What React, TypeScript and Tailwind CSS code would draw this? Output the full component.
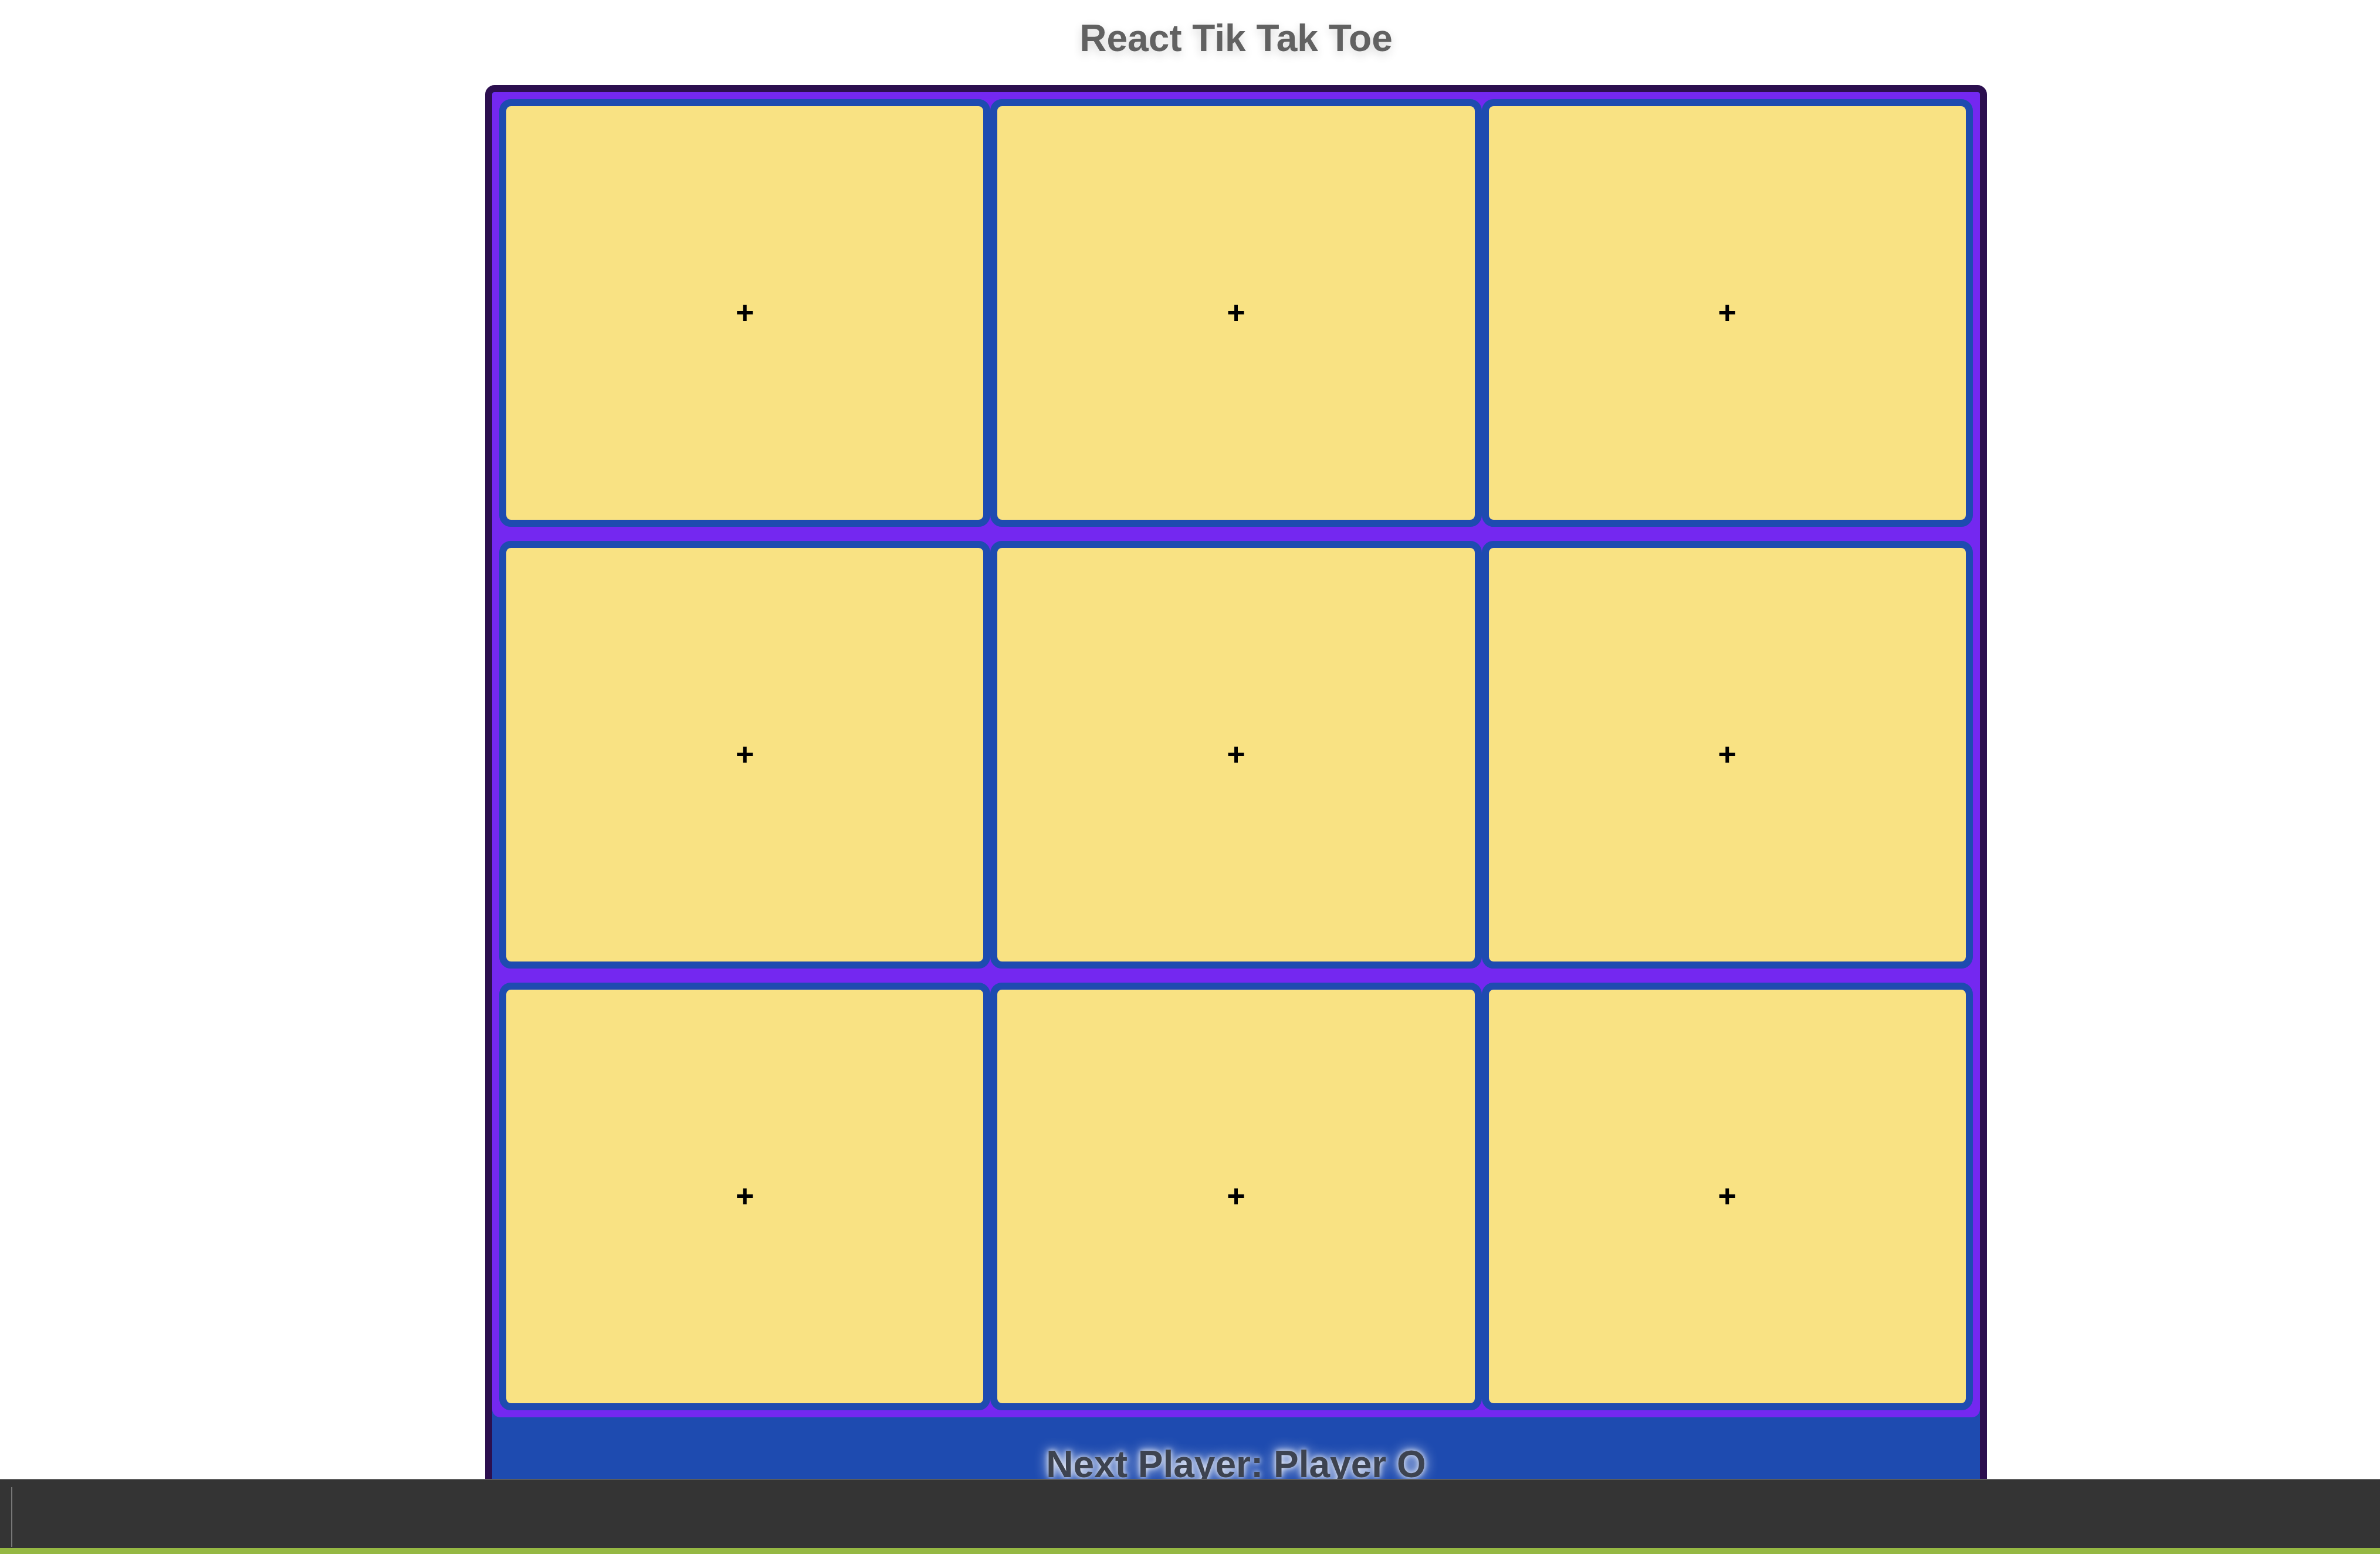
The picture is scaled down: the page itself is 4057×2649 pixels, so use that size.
import { useState } from 'react'

type Mark = 'X' | 'O' | null

function Cell({ value, onClick }: { value: Mark; onClick: () => void }) {
  return (
    <button
      onClick={onClick}
      className="h-[729px] flex items-center justify-center rounded-[20px] border-[12px] border-[#1e4bb0] bg-[#f9e283] text-black font-bold text-[54px] leading-none pb-[3px]"
    >
      {value ?? '+'}
    </button>
  )
}

export default function App() {
  const [cells, setCells] = useState<Mark[]>(Array(9).fill(null))
  const [xNext, setXNext] = useState(false)

  const play = (i: number) => {
    if (cells[i]) return
    const next = cells.slice()
    next[i] = xNext ? 'X' : 'O'
    setCells(next)
    setXNext(!xNext)
  }

  return (
    <div className="min-h-screen bg-white font-['Liberation_Sans',Arial,sans-serif]">
      <div className="ml-[827px] w-[2560px] flex flex-col items-center">
        <h1 className="mt-[33px] text-[64px] leading-[64px] font-bold text-[#616161] [text-shadow:0_6px_16px_rgba(0,0,0,0.16)]">
          React Tik Tak Toe
        </h1>

        <div className="mt-[48px] w-full rounded-[16px] border-[12px] border-[#2c0f4f] bg-[#1e4bb0] overflow-hidden">
          <div className="grid grid-cols-3 gap-y-[24px] p-[12px] bg-[#7428f0] rounded-t-[4px] rounded-b-[14px]">
            {cells.map((c, i) => (
              <Cell key={i} value={c} onClick={() => play(i)} />
            ))}
          </div>
          <div className="pt-[48px] pb-[40px] text-center text-[64px] leading-[64px] font-bold text-[#3d4350] [text-shadow:0_0_22px_#ffffff,0_0_10px_rgba(255,255,255,0.9)]">
            Next Player: Player {xNext ? 'X' : 'O'}
          </div>
        </div>
      </div>

      {/* console strip over the bottom of the page */}
      <div className="fixed bottom-0 left-0 right-0 h-[128px] flex flex-col">
        <div className="flex-1 border-t-2 border-[#5b5b5b] bg-[#343434] pl-[19px] pt-[12px]">
          <div className="w-[2px] h-[102px] bg-[#777777]" />
        </div>
        <div className="h-[10px] bg-[#95b843]" />
      </div>
    </div>
  )
}
